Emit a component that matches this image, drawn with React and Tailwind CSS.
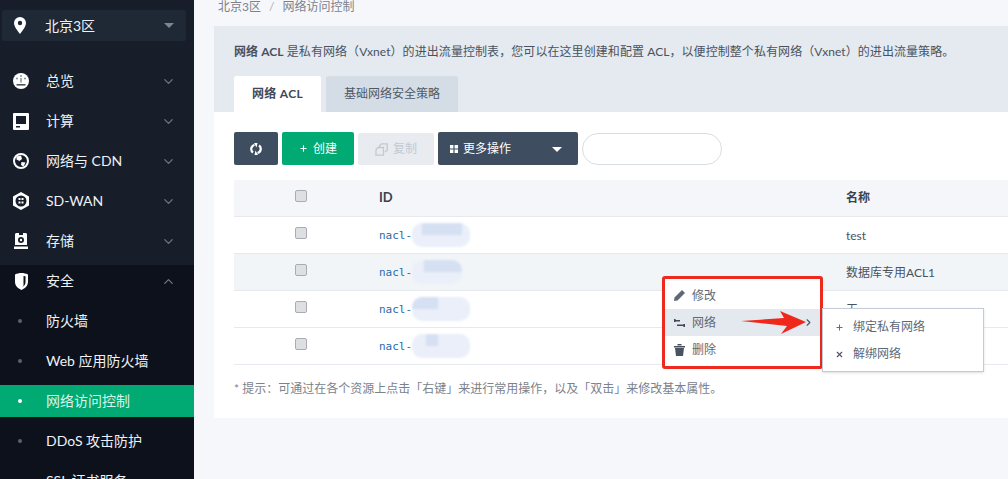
import React from "react";
import { ChevronDown, ChevronUp, ChevronRight, Plus, X } from "lucide-react";

const FONT = "font-['Lato','Noto_Sans_CJK_SC',sans-serif]";

function PinIcon() {
  return (
    <svg width="12" height="17" viewBox="0 0 12 17">
      <path fillRule="evenodd" fill="#fff" d="M6 0a6 6 0 0 1 6 6c0 3.500-3.600 8-6 11C3.600 14 0 9.500 0 6a6 6 0 0 1 6-6zm0 3.800a2.200 2.200 0 1 0 0 4.400 2.200 2.200 0 0 0 0-4.400z" />
    </svg>
  );
}

function GaugeIcon() {
  return (
    <svg width="16" height="16" viewBox="0 0 16 16">
      <circle cx="8" cy="8" r="8" fill="#fff" />
      <circle cx="8" cy="3" r=".9" fill="#7d8591" />
      <circle cx="4" cy="5.500" r=".9" fill="#7d8591" />
      <circle cx="12" cy="5.500" r=".9" fill="#7d8591" />
      <path d="M7.300 5h1.400v4.500H7.300z" fill="#7d8591" />
      <path d="M3.500 11h9v1.600h-9z" fill="#4a5260" />
    </svg>
  );
}

function ComputeIcon() {
  return (
    <svg width="16" height="17" viewBox="0 0 16 17">
      <path fillRule="evenodd" fill="#fff" d="M1 0h14a1 1 0 0 1 1 1v15a1 1 0 0 1-1 1H1a1 1 0 0 1-1-1V1a1 1 0 0 1 1-1zm2 3v8h10V3zm0 10v1.500h4V13z" />
    </svg>
  );
}

function GlobeIcon() {
  return (
    <svg width="16" height="16" viewBox="0 0 16 16">
      <circle cx="8" cy="8" r="7" fill="none" stroke="#fff" strokeWidth="2" />
      <path fill="#fff" d="M3.500 3.500 8 2.500l1 3.500-2.500 2-3-1.500zM8.500 9l4 .5-2 4-2.500-1.500z" />
    </svg>
  );
}

function HexIcon() {
  return (
    <svg width="16" height="18" viewBox="0 0 16 18">
      <path fillRule="evenodd" fill="#fff" d="M8 0l8 4.500v9L8 18l-8-4.500v-9zM8 3.500a5.500 5.500 0 1 0 0 11 5.500 5.500 0 0 0 0-11z" />
      <path fill="#fff" d="M5.500 6h2v2h-2zm3 0h2v2h-2zm-3 3.500h2v2h-2zm3 0h2v2h-2z" />
    </svg>
  );
}

function StorageIcon() {
  return (
    <svg width="14" height="16" viewBox="0 0 14 16">
      <path fillRule="evenodd" fill="#fff" d="M2 0h3v2h4V0h3l1 1v11H1V1zm5 4a3 3 0 1 0 0 6 3 3 0 0 0 0-6z" />
      <circle cx="7" cy="7" r="1.200" fill="#fff" />
      <path fill="#fff" d="M0 13.500h14V16H0z" />
    </svg>
  );
}

function ShieldIcon() {
  return (
    <svg width="13" height="17" viewBox="0 0 13 17">
      <path fillRule="evenodd" fill="#fff" d="M0 1.500C2 .5 4.200 0 6.500 0S11 .5 13 1.500V9c0 3.500-2.800 6.500-6.500 8C2.800 15.500 0 12.500 0 9zM8.500 3v9.500l-1 1.500c1.800-1 3-2.800 3-5V3.200z" />
    </svg>
  );
}

function RefreshIcon() {
  return (
    <svg width="12" height="12" viewBox="0 0 12 12">
      <path fill="none" stroke="#fff" strokeWidth="2.200" d="M4.500 2A4.200 4.200 0 0 0 3 9.500M7.500 10A4.200 4.200 0 0 0 9 2.500" />
      <path fill="#fff" d="M4 0l3.500 0-1 4.500zM8 12l-3.500 0 1-4.500z" />
    </svg>
  );
}

function CopyIcon() {
  return (
    <svg width="13" height="13" viewBox="0 0 13 13">
      <path fill="none" stroke="#c3c9d1" strokeWidth="1.300" d="M4.500 4.500V2.500L6.500.8h5.700v6.500L10 9M1 6.500 3 4.500h5.500V12.200H1z" />
    </svg>
  );
}

function GridIcon() {
  return (
    <svg width="8" height="8" viewBox="0 0 8 8">
      <path fill="#fff" d="M0 0h3.400v3.400H0zm4.600 0H8v3.400H4.600zM0 4.600h3.400V8H0zm4.600 0H8V8H4.600z" />
    </svg>
  );
}

function Caret({ color }) {
  return <div className={`h-0 w-0 border-x-[5px] border-t-[5px] border-x-transparent ${color}`} />;
}

function NavItem({ icon, label, open }) {
  const Chevron = open ? ChevronUp : ChevronDown;
  return (
    <div className="mb-2 flex h-8 items-center pr-[18px]">
      <div className="flex w-[46px] justify-center pl-[2px] pr-[6px]">{icon}</div>
      <span className="flex-1 text-sm text-[#eef1f5]">{label}</span>
      <Chevron size={15} strokeWidth={2} className="text-[#6f7784]" />
    </div>
  );
}

function SubItem({ label, active }) {
  return (
    <div className={`mb-2 flex h-8 items-center ${active ? "bg-[#00aa72]" : ""}`}>
      <div className="flex w-[46px] justify-center pr-[6px]">
        <div className={`h-1 w-1 rounded-full ${active ? "bg-white" : "bg-[#5a616d]"}`} />
      </div>
      <span className={`text-sm ${active ? "text-[#d8f5ea]" : "text-[#eef1f5]"}`}>{label}</span>
    </div>
  );
}

function Sidebar() {
  return (
    <aside className="flex h-full w-[194px] shrink-0 flex-col overflow-hidden bg-[#171e2a]">
      <div className="ml-[2px] mt-[10px] flex h-[31px] w-[184px] shrink-0 items-center rounded-[2px] bg-[#1f2936] pr-[12px]">
        <div className="flex w-[36px] justify-center">
          <PinIcon />
        </div>
        <span className="ml-[7px] flex-1 text-sm text-[#eef1f5]">北京3区</span>
        <Caret color="border-t-[#7d8591]" />
      </div>
      <div className="mt-6 shrink-0">
        <NavItem icon={<GaugeIcon />} label="总览" />
        <NavItem icon={<ComputeIcon />} label="计算" />
        <NavItem icon={<GlobeIcon />} label="网络与 CDN" />
        <NavItem icon={<HexIcon />} label="SD-WAN" />
        <NavItem icon={<StorageIcon />} label="存储" />
      </div>
      <div className="flex-1 bg-[#0c111c]">
        <NavItem icon={<ShieldIcon />} label="安全" open />
        <SubItem label="防火墙" />
        <SubItem label="Web 应用防火墙" />
        <SubItem label="网络访问控制" active />
        <SubItem label="DDoS 攻击防护" />
        <SubItem label="SSL 证书服务" />
      </div>
    </aside>
  );
}

function Checkbox() {
  return <div className="h-3 w-3 rounded-[2px] border border-[#a9adb3] bg-[#dedfe1]" />;
}

// pixelated patch that hides the rest of the id
function Redacted({ width, patch }) {
  return (
    <div className={`relative h-6 overflow-hidden rounded-[10px] bg-[#eaeff9] blur-[1px] ${width}`}>
      <div className={`absolute h-3 bg-[#d6e0f3] ${patch}`} />
    </div>
  );
}

function Row({ name, width, patch, striped }) {
  return (
    <div className={`grid h-[37px] grid-cols-[145px_467px_1fr] items-center border-b border-[#e6e9ee] ${striped ? "bg-[#f2f5f8]" : "bg-white"}`}>
      <div className="pb-[5px] pl-[61px]">
        <Checkbox />
      </div>
      <div className="flex items-center">
        <span className="pt-[2px] font-['DejaVu_Sans_Mono',monospace] text-[11px] text-[#2a6aa8]">nacl-</span>
        <Redacted width={width} patch={patch} />
      </div>
      <span className="pt-[2px] text-xs text-[#4a5260]">{name}</span>
    </div>
  );
}

function ContextMenu() {
  return (
    <div className="absolute left-[662px] top-[276px] flex items-start">
      <div className="flex h-[93px] w-[161px] flex-col justify-center rounded-[3px] border-[3px] border-[#ee2a1f] bg-white text-xs text-[#5f6875]">
        <div className="flex h-[27px] items-center gap-[7px] px-[9px]">
          <svg width="11" height="11" viewBox="0 0 11 11"><path fill="#5f6875" d="M8 0l3 3-7.500 7.500L0 11l.5-3.500z" /></svg>
          <span>修改</span>
        </div>
        <div className="flex h-[27px] items-center gap-[7px] bg-[#e3e9ef] pl-[9px] pr-[6px]">
          <svg width="11" height="8" viewBox="0 0 11 8"><path fill="#3f4957" d="M0 1h6v1.600H0zM0 0h1.600v3H0zM3 5.400h8V7H3zM9.400 5H11v3H9.400z" /></svg>
          <span className="flex-1 pt-[1px]">网络</span>
          <ChevronRight size={11} strokeWidth={2.500} className="text-[#4a5260]" />
        </div>
        <div className="flex h-[27px] items-center gap-[7px] px-[9px]">
          <svg width="11" height="12" viewBox="0 0 11 12"><path fill="#4a5260" d="M0 2h11v1.500H0zM3.500 0h4v1.500h-4zM1 4h9l-1 8H2z" /></svg>
          <span className="pt-[1px]">删除</span>
        </div>
      </div>
      <div className="-ml-[1px] mt-[32px] flex h-[64px] w-[162px] flex-col justify-center border border-[#c3cbd6] bg-white text-xs text-[#5f6875] shadow-sm">
        <div className="flex h-[27px] items-center gap-[9px] pl-[12px] pt-[1px]">
          <Plus size={9} strokeWidth={2.500} className="text-[#5f6875]" />
          <span>绑定私有网络</span>
        </div>
        <div className="flex h-[27px] items-center gap-[9px] pl-[12px] pt-[1px]">
          <X size={9} strokeWidth={3} className="text-[#4a5260]" />
          <span>解绑网络</span>
        </div>
      </div>
    </div>
  );
}

function RedArrow() {
  return (
    <svg className="absolute left-[740px] top-[310px]" width="68" height="26" viewBox="0 0 68 26">
      <path fill="#f0281c" d="M1 11 44 8 40 1 66 12 41 24 47 16z" />
    </svg>
  );
}

export default function App() {
  return (
    <div className={`relative flex h-[479px] w-[1008px] overflow-hidden bg-[#f6f7fb] ${FONT}`}>
      <Sidebar />
      <main className="min-w-0 flex-1 pl-[20px]">
        <div className="flex h-[26px] items-center gap-[8px] pb-[12px] pl-[4px] text-xs text-[#7b828c]">
          <span>北京3区</span>
          <span className="text-[#aab0b8]">/</span>
          <span>网络访问控制</span>
        </div>
        <div className="bg-white">
          <div className="h-[86px] bg-[#e4eaf0] pl-[20px]">
            <p className="pt-[17px] text-xs leading-[18px] tracking-[0.07px] text-[#4a5260]">
              <span className="font-bold">网络 ACL</span> 是私有网络（Vxnet）的进出流量控制表，您可以在这里创建和配置 ACL，以便控制整个私有网络（Vxnet）的进出流量策略。
            </p>
            <div className="mt-[15px] flex gap-[5px]">
              <div className="flex h-9 w-[87px] items-center justify-center rounded-t-[2px] bg-white text-xs font-bold tracking-[0.3px] text-[#3f4957]">网络 ACL</div>
              <div className="flex h-9 w-[132px] items-center justify-center rounded-t-[2px] bg-[#d4dde6] text-xs text-[#4f5966]">基础网络安全策略</div>
            </div>
          </div>
          <div className="h-[306px] pl-[20px] pt-[20px]">
            <div className="flex h-[33px] items-center">
              <button className="flex h-[33px] w-11 items-center justify-center rounded-[2px] bg-[#3e4e60]">
                <RefreshIcon />
              </button>
              <button className="ml-[4px] flex h-[33px] w-[72px] items-center justify-center gap-[5px] rounded-[2px] bg-[#00aa72] text-xs text-white">
                <Plus size={9} strokeWidth={3} />
                创建
              </button>
              <button className="ml-[4px] flex h-[32px] w-[76px] items-center justify-center gap-[5px] rounded-[2px] bg-[#e8ecf1] pt-[1px] text-xs text-[#c3c9d1]">
                <CopyIcon />
                复制
              </button>
              <button className="ml-[4px] flex h-[33px] w-[140px] items-center rounded-[2px] bg-[#3e4e60] pl-[12px] pr-[16px] pt-[1px] text-xs text-white">
                <GridIcon />
                <span className="ml-[5px] flex-1 text-left">更多操作</span>
                <Caret color="border-t-white" />
              </button>
              <div className="ml-[4px] h-[32px] w-[140px] rounded-full border border-[#d8dee5] bg-white" />
            </div>
            <div className="mt-[15px]">
              <div className="grid h-[37px] grid-cols-[145px_467px_1fr] items-center border-b border-[#e6e9ee] bg-[#f4f6f9]">
                <div className="pb-[5px] pl-[61px]">
                  <Checkbox />
                </div>
                <span className="text-[13px] font-bold text-[#3a4250]">ID</span>
                <span className="text-xs font-bold text-[#3a4250]">名称</span>
              </div>
              <Row name="test" width="w-[58px]" patch="left-[10px] top-0 w-[40px]" />
              <Row name="数据库专用ACL1" width="w-[50px]" patch="left-[12px] top-0 w-[38px]" striped />
              <Row name="无" width="w-[58px]" patch="left-0 top-0 w-[26px]" />
              <Row name="" width="w-[58px]" patch="left-[14px] top-0 w-[12px]" />
            </div>
            <p className="mt-[15px] text-xs leading-[18px] text-[#7b828c]">* 提示：可通过在各个资源上点击「右键」来进行常用操作，以及「双击」来修改基本属性。</p>
          </div>
        </div>
      </main>
      <ContextMenu />
      <RedArrow />
    </div>
  );
}
